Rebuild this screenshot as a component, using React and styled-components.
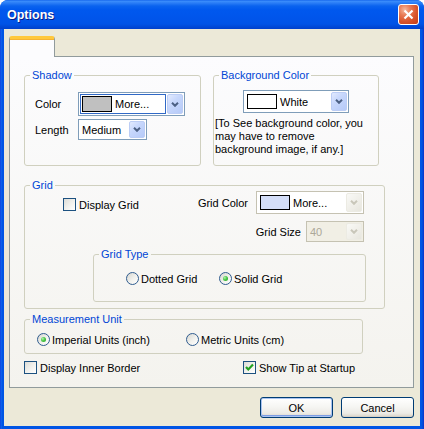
import React from 'react';
import styled, { createGlobalStyle } from 'styled-components';

const Global = createGlobalStyle`
  html, body { margin: 0; padding: 0; background: #fff; }
  body { font-family: "Liberation Sans", Arial, sans-serif; font-size: 11px; color: #000; }
  * { box-sizing: border-box; }
`;

const Window = styled.div`
  width: 424px;
  height: 429px;
  display: flex;
  flex-direction: column;
  background: linear-gradient(90deg, #0831D9 0, #166AEE 1px, #0055E5 2px, #0055E5 calc(100% - 2px), #0844C8 calc(100% - 1px), #0831D9 100%);
  border-radius: 8px 8px 0 0;
  overflow: hidden;
`;

const TitleBar = styled.div`
  height: 29px;
  flex: none;
  display: flex;
  align-items: center;
  justify-content: space-between;
  padding: 0 5px 0 7px;
  background: linear-gradient(180deg, #0A5BE8 0px, #3D8FFC 1px, #2A7DF6 3px, #0A63EF 6px, #0058EE 10px, #0055EB 18px, #0053E6 24px, #0048D6 27px, #0040CC 29px);
`;

const Title = styled.span`
  color: #fff;
  font-family: "Liberation Sans", Arial, sans-serif;
  font-weight: bold;
  font-size: 12.5px;
  text-shadow: 1px 1px 0 #0A1D83;
  margin-top: 1px;
`;

const CloseBtn = styled.div`
  width: 21px;
  height: 21px;
  border: 1px solid #fff;
  border-radius: 3px;
  background: radial-gradient(circle at 30% 25%, #F4B89E 0%, #E87A55 30%, #D9552C 60%, #C43C15 100%);
  display: flex;
  align-items: center;
  justify-content: center;
`;

const Client = styled.div`
  flex: 1;
  margin: 0 4px 3px 4px;
  background: #ECE9D8;
  display: flex;
  flex-direction: column;
  padding: 7px 6px 0 5px;
`;

const Tab = styled.div`
  width: 46px;
  height: 21px;
  margin-bottom: -1px;
  position: relative;
  z-index: 1;
  background: #FCFCFE;
  border: 1px solid #919B9C;
  border-top: 3px solid #FFC83C;
  border-bottom: none;
  border-radius: 3px 3px 0 0;
  box-shadow: inset 0 1px 0 #F5B333;
`;

const Panel = styled.div`
  height: 332px;
  border: 1px solid #919B9C;
  background: linear-gradient(180deg, #FCFCFE 0%, #F4F3EE 100%);
  padding: 13px 0 0 14px;
  display: flex;
  flex-direction: column;
`;

const Row = styled.div`
  display: flex;
  gap: ${p => p.$gap || 0}px;
`;

const Group = styled.fieldset`
  margin: ${p => p.$m || '0'};
  padding: 0;
  min-width: 0;
  width: ${p => p.$w}px;
  height: ${p => p.$h}px;
  border: 1px solid #D0D0BF;
  border-radius: 3px;
`;

const Legend = styled.legend`
  margin-left: 5px;
  padding: 0 2px;
  font-size: 11px;
  line-height: 11px;
  color: #0046D5;
`;

const ShadowBody = styled.div`
  display: grid;
  grid-template-columns: 43px auto;
  row-gap: 3px;
  align-items: center;
  justify-items: start;
  padding: 11px 0 0 10px;
`;

const BgBody = styled.div`
  display: flex;
  flex-direction: column;
  padding-top: 9px;
`;

const Note = styled.div`
  margin-top: 4px;
  padding-left: 1px;
  line-height: 13px;
  white-space: nowrap;
`;

const Combo = styled.div`
  display: flex;
  width: ${p => p.$w}px;
  height: ${p => p.$h}px;
  flex: none;
  border: 1px solid ${p => (p.$muted ? '#C5C2B2' : '#7F9DB9')};
  background: ${p => (p.$disabled ? '#F1EFE5' : '#fff')};
  padding: 1px;
  gap: 1px;
  margin: ${p => p.$m || '0'};
`;

const ComboField = styled.div`
  flex: 1;
  display: flex;
  align-items: center;
  gap: 3px;
  padding: 0 1px;
  border: 1px solid ${p => (p.$focus ? '#3169C6' : 'transparent')};
  color: ${p => (p.$disabled ? '#ACA899' : '#000')};
  white-space: nowrap;
  overflow: hidden;
`;

const Swatch = styled.span`
  width: 30px;
  align-self: stretch;
  margin: 1px 0;
  border: 1px solid #000;
  background: ${p => p.$c};
  flex: none;
`;

const DropBtn = styled.span`
  width: 16px;
  flex: none;
  border-radius: 2px;
  border: 1px solid ${p => (p.$disabled ? '#ECEBE3' : '#BCCDF5')};
  background: ${p =>
    p.$disabled
      ? 'linear-gradient(135deg, #F9F9F6 0%, #EFEEE8 60%, #E7E6DE 100%)'
      : 'linear-gradient(135deg, #E2EAFE 0%, #C7D7FC 40%, #B6CAF8 100%)'};
  display: flex;
  align-items: center;
  justify-content: center;
`;

const GridBody = styled.div`
  padding: 0 20px 0 38px;
  display: flex;
  flex-direction: column;
`;

const TopArea = styled.div`
  display: flex;
  justify-content: space-between;
  align-items: flex-start;
`;

const RightCol = styled.div`
  display: flex;
  flex-direction: column;
  align-items: flex-end;
  gap: 7px;
`;

const LabeledRow = styled.div`
  display: flex;
  align-items: center;
  gap: ${p => p.$gap}px;
`;

const Choice = styled.label`
  display: flex;
  align-items: center;
  gap: ${p => p.$gap ?? 3}px;
  height: ${p => (p.$h ? `${p.$h}px` : 'auto')};
  margin-top: ${p => p.$mt || 0}px;
  white-space: nowrap;
`;

const Box = styled.span`
  width: 13px;
  height: 13px;
  flex: none;
  border: 1px solid #1C5180;
  background: linear-gradient(135deg, #DCDCD7 0%, #F0F0EC 50%, #FFFFFF 100%);
  display: flex;
  align-items: center;
  justify-content: center;
`;

const RadioDot = styled.span`
  width: 13px;
  height: 13px;
  flex: none;
  border-radius: 50%;
  border: 1px solid #2F5C8F;
  background: linear-gradient(135deg, #D6D6D0 0%, #F2F2EE 55%, #FFFFFF 100%);
  display: flex;
  align-items: center;
  justify-content: center;
  &::after {
    content: '';
    display: ${p => (p.$on ? 'block' : 'none')};
    width: 5px;
    height: 5px;
    border-radius: 50%;
    background: radial-gradient(circle at 35% 35%, #B4F4B0 0%, #4BC748 45%, #21A121 100%);
  }
`;

const RadioGrid = styled.div`
  display: grid;
  grid-template-columns: ${p => p.$col}px auto;
  padding: ${p => p.$pad};
`;

const BottomChecks = styled.div`
  display: grid;
  grid-template-columns: 219px auto;
  margin-top: 7px;
`;

const Buttons = styled.div`
  display: flex;
  justify-content: flex-end;
  gap: 8px;
  margin-top: 9px;
`;

const Button = styled.button`
  width: 73px;
  height: 21px;
  padding: 0;
  font-family: "Liberation Sans", Arial, sans-serif;
  font-size: 11px;
  color: #000;
  border: 1px solid #003C74;
  border-radius: 3px;
  background: linear-gradient(180deg, #FFFFFF 0%, #F6F6F3 45%, #ECEBE6 80%, #D8D2C6 100%);
  box-shadow: ${p =>
    p.$default
      ? 'inset 0 0 0 1px #A9C3F0, inset 0 -1px 0 1px #7D9DE4'
      : 'inset 0 -1px 0 #D6D0C5'};
`;

const Arrow = ({ disabled }) => (
  <svg width="8" height="5" viewBox="0 0 8 5">
    <path d="M1 0.8 L4 3.8 L7 0.8" fill="none" stroke={disabled ? '#C9C7BA' : '#4D6185'} strokeWidth="2" />
  </svg>
);

const Check = () => (
  <svg width="9" height="9" viewBox="0 0 9 9">
    <path d="M1 4 L3.3 6.5 L8 1.5" fill="none" stroke="#21A121" strokeWidth="2.2" />
  </svg>
);

const CheckBox = ({ checked, children, ...rest }) => (
  <Choice {...rest}>
    <Box>{checked && <Check />}</Box>
    <span>{children}</span>
  </Choice>
);

const Radio = ({ on, children }) => (
  <Choice $gap={2}>
    <RadioDot $on={on} />
    <span>{children}</span>
  </Choice>
);

export default function App() {
  return (
    <>
      <Global />
      <Window>
        <TitleBar>
          <Title>Options</Title>
          <CloseBtn>
            <svg width="11" height="11" viewBox="0 0 11 11">
              <path d="M1.5 1.5 L9.5 9.5 M9.5 1.5 L1.5 9.5" stroke="#fff" strokeWidth="2.2" />
            </svg>
          </CloseBtn>
        </TitleBar>
        <Client>
          <Tab />
          <Panel>
            <Row $gap={12}>
              <Group $w={177} $h={96}>
                <Legend>Shadow</Legend>
                <ShadowBody>
                  <span>Color</span>
                  <Combo $w={107} $h={24}>
                    <ComboField $focus>
                      <Swatch $c="#C0C0C0" />
                      More...
                    </ComboField>
                    <DropBtn><Arrow /></DropBtn>
                  </Combo>
                  <span>Length</span>
                  <Combo $w={69} $h={21}>
                    <ComboField>Medium</ComboField>
                    <DropBtn><Arrow /></DropBtn>
                  </Combo>
                </ShadowBody>
              </Group>
              <Group $w={166} $h={96}>
                <Legend>Background Color</Legend>
                <BgBody>
                  <Combo $w={106} $h={23} $m="0 auto">
                    <ComboField>
                      <Swatch $c="#FFFFFF" />
                      White
                    </ComboField>
                    <DropBtn><Arrow /></DropBtn>
                  </Combo>
                  <Note>
                    [To See background color, you<br />
                    may have to remove<br />
                    background image, if any.]
                  </Note>
                </BgBody>
              </Group>
            </Row>

            <Group $w={361} $h={129} $m="14px 0 0 0">
              <Legend>Grid</Legend>
              <GridBody>
                <TopArea>
                  <CheckBox $h={23} $mt={2}>Display Grid</CheckBox>
                  <RightCol>
                    <LabeledRow $gap={8}>
                      <span>Grid Color</span>
                      <Combo $w={108} $h={23} $muted>
                        <ComboField>
                          <Swatch $c="#D4DEF8" />
                          More...
                        </ComboField>
                        <DropBtn $disabled><Arrow disabled /></DropBtn>
                      </Combo>
                    </LabeledRow>
                    <LabeledRow $gap={5}>
                      <span>Grid Size</span>
                      <Combo $w={58} $h={21} $muted $disabled>
                        <ComboField $disabled>40</ComboField>
                        <DropBtn $disabled><Arrow disabled /></DropBtn>
                      </Combo>
                    </LabeledRow>
                  </RightCol>
                </TopArea>
                <Group $w={273} $h={53} $m="7px 0 0 30px">
                  <Legend>Grid Type</Legend>
                  <RadioGrid $col={93} $pad="12px 0 0 32px">
                    <Radio>Dotted Grid</Radio>
                    <Radio on>Solid Grid</Radio>
                  </RadioGrid>
                </Group>
              </GridBody>
            </Group>

            <Group $w={339} $h={40} $m="5px 0 0 0">
              <Legend>Measurement Unit</Legend>
              <RadioGrid $col={149} $pad="8px 0 0 12px">
                <Radio on>Imperial Units (inch)</Radio>
                <Radio>Metric Units (cm)</Radio>
              </RadioGrid>
            </Group>

            <BottomChecks>
              <CheckBox>Display Inner Border</CheckBox>
              <CheckBox checked>Show Tip at Startup</CheckBox>
            </BottomChecks>
          </Panel>
          <Buttons>
            <Button $default>OK</Button>
            <Button>Cancel</Button>
          </Buttons>
        </Client>
      </Window>
    </>
  );
}
